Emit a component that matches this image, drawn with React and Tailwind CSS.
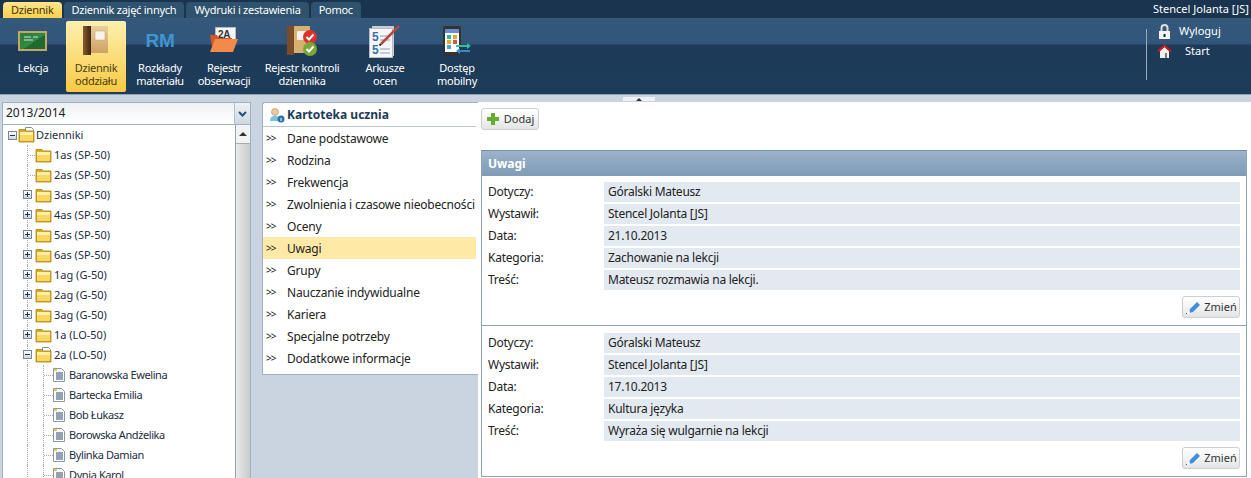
import React from 'react';

const font = { fontFamily: '"Noto Sans", sans-serif' };

const tabs = ['Dziennik', 'Dziennik zajęć innych', 'Wydruki i zestawienia', 'Pomoc'];
const classes = [
  ['1as (SP-50)', false], ['2as (SP-50)', false], ['3as (SP-50)', true], ['4as (SP-50)', true],
  ['5as (SP-50)', true], ['6as (SP-50)', true], ['1ag (G-50)', true], ['2ag (G-50)', true],
  ['3ag (G-50)', true], ['1a (LO-50)', true],
];
const students = ['Baranowska Ewelina', 'Bartecka Emilia', 'Bob Łukasz', 'Borowska Andżelika', 'Bylinka Damian', 'Dynia Karol'];
const menu = ['Dane podstawowe', 'Rodzina', 'Frekwencja', 'Zwolnienia i czasowe nieobecności', 'Oceny', 'Uwagi', 'Grupy', 'Nauczanie indywidualne', 'Kariera', 'Specjalne potrzeby', 'Dodatkowe informacje'];
const notes = [
  ['Góralski Mateusz', 'Stencel Jolanta [JS]', '21.10.2013', 'Zachowanie na lekcji', 'Mateusz rozmawia na lekcji.'],
  ['Góralski Mateusz', 'Stencel Jolanta [JS]', '17.10.2013', 'Kultura języka', 'Wyraża się wulgarnie na lekcji'],
];
const labels = ['Dotyczy:', 'Wystawił:', 'Data:', 'Kategoria:', 'Treść:'];

const BoardIcon = () => (
  <svg width="30" height="24" viewBox="0 0 30 24">
    <defs>
      <linearGradient id="board" x1="0" y1="0" x2="1" y2="1">
        <stop offset="0" stopColor="#2c7a3a" />
        <stop offset="0.55" stopColor="#2f8a44" />
        <stop offset="0.56" stopColor="#1f6a30" />
      </linearGradient>
    </defs>
    <rect x="1" y="3" width="27" height="18" fill="url(#board)" stroke="#c4a763" strokeWidth="2" />
    <path d="M6 8h7M15 8h5M6 11h9" stroke="#cfe6d2" />
  </svg>
);
const BookIcon = () => (
  <svg width="26" height="30" viewBox="0 0 26 30">
    <defs>
      <linearGradient id="cover" x1="0" y1="0" x2="0" y2="1">
        <stop offset="0" stopColor="#e9cf9c" />
        <stop offset="1" stopColor="#cfa163" />
      </linearGradient>
      <linearGradient id="spine" x1="0" y1="0" x2="1" y2="0">
        <stop offset="0" stopColor="#8a5a2e" />
        <stop offset="1" stopColor="#3d2412" />
      </linearGradient>
    </defs>
    <rect x="0" y="0" width="8" height="29" fill="url(#spine)" />
    <rect x="8" y="0" width="17" height="27" fill="url(#cover)" />
    <rect x="12" y="5" width="10" height="9" rx="1" fill="#f6f2e8" stroke="#c2a36b" strokeWidth=".5" />
  </svg>
);
const FolderDocIcon = () => (
  <svg width="30" height="28" viewBox="0 0 30 28">
    <path d="M6.5 .5h20v16h-20z" fill="#f4f4f4" stroke="#bbb" />
    <text x="9" y="11" fontSize="10" fontWeight="700" fill="#333" style={{ fontFamily: '"Liberation Sans", sans-serif' }}>2A</text>
    <path d="M1 8h7l2 3h13v14H4z" fill="#cf5a28" />
    <path d="M6 12h23l-5 13H1z" fill="#f28a4c" />
  </svg>
);
const ControlIcon = () => (
  <svg width="32" height="32" viewBox="0 0 32 32">
    <rect x="1" y="1" width="7" height="29" fill="#7a4c28" />
    <rect x="8" y="1" width="16" height="27" fill="#d8b16f" />
    <rect x="11" y="6" width="10" height="9" rx="1" fill="#f3f3f3" />
    <circle cx="24" cy="12" r="7" fill="#d9332b" />
    <path d="M20.5 12l2.5 2.5 4.5-5" stroke="#fff" strokeWidth="2" fill="none" />
    <circle cx="24" cy="24" r="7" fill="#79a83a" />
    <path d="M20.5 24l2.5 2.5 4.5-5" stroke="#fff" strokeWidth="2" fill="none" />
  </svg>
);
const SheetIcon = () => (
  <svg width="34" height="36" viewBox="0 0 34 36">
    <rect x="4" y="3" width="22" height="30" fill="#c9cdd3" />
    <rect x="1.5" y="5.5" width="23" height="29" fill="#f5f6f7" stroke="#b8bcc2" />
    <text x="4" y="18" fontSize="12" fontWeight="700" fill="#3a6db0" style={{ fontFamily: '"Liberation Sans", sans-serif' }}>5</text>
    <text x="4" y="31" fontSize="12" fontWeight="700" fill="#3a6db0" style={{ fontFamily: '"Liberation Sans", sans-serif' }}>5</text>
    <path d="M12 13h10M12 17h10M12 26h10M12 30h10" stroke="#99a" />
    <path d="M13 21L31 3" stroke="#b5483f" strokeWidth="2.5" />
    <path d="M13 21l-1.5 1.5" stroke="#333" strokeWidth="2" />
  </svg>
);
const PhoneIcon = () => (
  <svg width="28" height="30" viewBox="0 0 28 30">
    <rect x="0" y="0" width="18" height="30" rx="2" fill="#333" />
    <rect x="2" y="3" width="14" height="4" fill="#6a8fd0" />
    <rect x="2" y="7" width="14" height="19" fill="#fff" />
    <rect x="4" y="9" width="4" height="4" fill="#2fb79b" />
    <rect x="10" y="9" width="4" height="4" fill="#dcae22" />
    <rect x="4" y="14" width="4" height="4" fill="#dcae22" />
    <rect x="10" y="14" width="4" height="4" fill="#d9534f" />
    <rect x="4" y="19" width="4" height="4" fill="#4ba3dc" />
    <path d="M13 19h11v-2l4 3-4 3v-2H13z" fill="#2fc0a0" />
    <path d="M27 26H17v2l-4-3 4-3v2h10z" fill="#3f86cf" />
  </svg>
);
const RmIcon = () => (
  <span className="text-[19px] leading-8 font-bold text-[#3f95d4]" style={{ fontFamily: '"Liberation Sans", sans-serif' }}>RM</span>
);

const ribbon = [
  { w: 'w-[66px]', icon: <BoardIcon />, lines: ['Lekcja'] },
  { w: 'w-[60px]', icon: <BookIcon />, lines: ['Dziennik', 'oddziału'], active: true },
  { w: 'w-[68px]', icon: <RmIcon />, lines: ['Rozkłady', 'materiału'] },
  { w: 'w-[60px]', icon: <FolderDocIcon />, lines: ['Rejestr', 'obserwacji'] },
  { w: 'w-[96px]', icon: <ControlIcon />, lines: ['Rejestr kontroli', 'dziennika'] },
  { w: 'w-[70px]', icon: <SheetIcon />, lines: ['Arkusze', 'ocen'] },
  { w: 'w-[74px]', icon: <PhoneIcon />, lines: ['Dostęp', 'mobilny'] },
];

const Folder = ({ open }) => (
  <svg width="17" height="16" viewBox="0 0 17 16" className="shrink-0">
    {open && <path d="M7.5 .5h6l2 2v6h-8z" fill="#fff" stroke="#889" />}
    <path d="M1 2.5h6l1 1.5h8V15H1z" fill="#d7a928" stroke="#a8821a" strokeWidth=".8" />
    <path d="M2 5h13v9H2z" fill="#f8d860" />
    <path d="M2 5h13v3H2z" fill="#fdf0a4" />
  </svg>
);
const Doc = () => (
  <svg width="12" height="14" viewBox="0 0 12 14" className="shrink-0">
    <path d="M.5.5h8l3 3v10H.5z" fill="#fff" stroke="#8a97a6" />
    <rect x="1" y="1" width="3" height="2" fill="#f0c64a" />
    <path d="M3 5h7M3 7h7M3 9h7M3 11h7" stroke="#26476b" />
  </svg>
);
const Toggle = ({ open }) => (
  <span className="relative w-[9px] h-[9px] border border-[#7c8794] bg-gradient-to-b from-white to-[#cfd6dd] shrink-0">
    <span className="absolute left-[1px] top-[3px] w-[5px] h-[1px] bg-[#22354a]" />
    {!open && <span className="absolute left-[3px] top-[1px] w-[1px] h-[5px] bg-[#22354a]" />}
  </span>
);
const Guide = ({ w }) => <span className={`${w} h-full border-l border-dotted border-[#a9a9a9] shrink-0`} />;

const ClassRow = ({ name, toggle, open }) => (
  <div className="h-5 flex items-center pl-[27px]">
    <span className="w-[8px] h-full relative shrink-0 border-l border-dotted border-[#a9a9a9]">
      {toggle ? (
        <span className="absolute -left-[5px] top-[5px] flex"><Toggle open={open} /></span>
      ) : (
        <span className="absolute left-0 top-[10px] w-[7px] border-t border-dotted border-[#a9a9a9]" />
      )}
    </span>
    <Folder open={open} />
    <span className="ml-[2px] text-[#1c2c40]">{name}</span>
  </div>
);

const Field = ({ label, value }) => (
  <div className="flex h-5">
    <span className="w-[116px] leading-5 text-[#222]">{label}</span>
    <span className="flex-1 bg-[#e3e9f0] pl-1 leading-5 text-[#222]">{value}</span>
  </div>
);

const Pencil = () => (
  <svg width="17" height="16" viewBox="0 0 17 16">
    <path d="M5 10l7-7 3 3-7 7-4 1z" fill="#3f8fe0" />
    <path d="M4 11l-2 4 3-1z" fill="#fff" />
    <path d="M1 15l1-1" stroke="#555" />
  </svg>
);

export default function App() {
  return (
    <div className="w-[1251px] h-[478px] overflow-hidden flex flex-col bg-[#c9d4e0] text-[11px]" style={font}>
      {/* top tabs */}
      <div className="h-[18px] bg-[#1a3450] flex items-end pl-[3px] gap-[2px] relative">
        {tabs.map((t, i) => (
          <div key={t} className={`h-4 px-[8px] rounded-t-[4px] leading-4 tracking-[-0.25px] ${i === 0 ? 'bg-gradient-to-b from-[#ffe68a] to-[#fbcf4a] text-[#3c3413]' : 'bg-[#2f526f] text-white'}`}>
            {t}
          </div>
        ))}
        <span className="ml-auto pr-[2px] self-center text-white">Stencel Jolanta [JS]</span>
      </div>

      {/* ribbon */}
      <div className="h-[76px] bg-[linear-gradient(#3b5f80_0,#34587a_1px,#32567a_26px,#1d3b58_27px,#1d3c5a_100%)] flex">
        {ribbon.map(item => (
          <div
            key={item.lines[0] + item.w}
            className={`${item.w} flex flex-col items-center mt-[3px] h-[71px] rounded-[2px] tracking-[-0.25px] ${item.active ? 'bg-gradient-to-b from-[#fff0ae] via-[#fbdd7a] to-[#f8c93f] text-[#4a3c10]' : 'text-white'}`}
          >
            <div className="h-[36px] mt-[2px] flex items-center justify-center">{item.icon}</div>
            <div className="mt-[2px] leading-[13px] text-center whitespace-nowrap">
              {item.lines.map(l => <div key={l}>{l}</div>)}
            </div>
          </div>
        ))}
        <div className="ml-auto w-[105px] flex">
          <span className="w-px h-[51px] mt-[11px] bg-[#9aa9b8]" />
          <div className="pl-[11px] pt-[3px] text-white">
            <div className="flex items-center h-5 gap-[8px]">
              <svg width="13" height="15" viewBox="0 0 13 15">
                <path d="M3.5 7V4a3 3 0 016 0v3" fill="none" stroke="#d8dde2" strokeWidth="2" />
                <rect x="1" y="7" width="11" height="8" fill="#f4f4f4" />
                <rect x="5.5" y="10" width="2" height="3" fill="#222" />
              </svg>
              <span>Wyloguj</span>
            </div>
            <div className="flex items-center h-5 gap-[13px] -ml-[1px]">
              <svg width="15" height="14" viewBox="0 0 15 14">
                <path d="M3 7v7h9V7L7.5 3z" fill="#eee" />
                <path d="M1 7.5L7.5 1.5 14 7.5" fill="none" stroke="#d8141c" strokeWidth="2" />
                <rect x="8" y="9" width="2" height="5" fill="#777" />
              </svg>
              <span>Start</span>
            </div>
          </div>
        </div>
      </div>

      {/* splitter */}
      <div className="h-2 relative border-t border-[#8fa1b3]">
        <div className="absolute left-[623px] top-[2px] w-8 h-[4px] bg-[#edf0f4] flex items-center justify-center">
          <span className="border-x-[3px] border-x-transparent border-b-[3px] border-b-[#333]" />
        </div>
      </div>

      <div className="flex-1 min-h-0 flex">
        {/* tree column */}
        <div className="w-[249px] ml-[2px] shrink-0 flex flex-col border-x border-t border-[#9fb0c1] bg-white min-h-0">
          <div className="h-[22px] flex border-b border-[#9fb0c1] shrink-0">
            <span className="flex-1 bg-gradient-to-b from-[#eef1f4] to-white text-[12px] leading-[20px] pl-[3px] text-[#222]">2013/2014</span>
            <span className="w-4 bg-gradient-to-b from-[#eef2f6] to-[#cfd7e0] border-l border-[#b5c1cc] flex items-center justify-center">
              <svg width="9" height="6" viewBox="0 0 9 6"><path d="M1 1l3.5 3.5L8 1" fill="none" stroke="#2a4d80" strokeWidth="2" /></svg>
            </span>
          </div>
          <div className="flex-1 min-h-0 flex overflow-hidden">
            <div className="flex-1 min-w-0 -ml-[3px]">
              <div className="h-5 flex items-center pl-[8px] gap-[1px]">
                <Toggle open />
                <Folder open />
                <span className="text-[#1c2c40]">Dzienniki</span>
              </div>
              {classes.map(([name, toggle]) => <ClassRow key={name} name={name} toggle={toggle} />)}
              <ClassRow name="2a (LO-50)" toggle open />
              {students.map(s => (
                <div key={s} className="h-5 flex items-center pl-[27px]">
                  <Guide w="w-[16px]" />
                  <span className="w-[10px] h-full relative border-l border-dotted border-[#a9a9a9] shrink-0">
                    <span className="absolute left-0 top-[10px] w-[9px] border-t border-dotted border-[#a9a9a9]" />
                  </span>
                  <Doc />
                  <span className="ml-[4px] text-[#1c2c40] tracking-[-0.4px]">{s}</span>
                </div>
              ))}
            </div>
            <div className="w-[15px] border-l border-[#9aa3ac] bg-[#f2f3f4] flex flex-col shrink-0">
              <div className="h-[18px] flex items-center justify-center">
                <span className="border-x-[4px] border-x-transparent border-b-[4px] border-b-[#333]" />
              </div>
              <div className="flex-1 bg-gradient-to-r from-[#e9eaeb] to-[#c9cbcd] border-t border-[#aaa]" />
            </div>
          </div>
        </div>

        {/* student menu */}
        <div className="ml-[11px] w-[216px] shrink-0 self-start h-[273px] bg-white border-l border-y border-[#9fb0c1] rounded-tl-[3px] text-[12px]">
          <div className="h-6 mr-[2px] flex items-center pl-[6px] gap-[2px] border-b border-[#bcc5ce]">
            <svg width="16" height="16" viewBox="0 0 16 16">
              <circle cx="6" cy="5" r="3.5" fill="#e9c9a0" stroke="#a87a4a" strokeWidth=".5" />
              <path d="M1 14c0-4 2-5 5-5s5 1 5 5z" fill="#79c3df" />
              <circle cx="12" cy="12" r="3.5" fill="#2a6fb0" />
              <rect x="11.5" y="11" width="1" height="3" fill="#fff" />
            </svg>
            <span className="font-bold text-[#203a5a] pt-[1px]">Kartoteka ucznia</span>
          </div>
          {menu.map(m => (
            <div key={m} className={`h-[22px] mr-[2px] flex items-center whitespace-nowrap ${m === 'Uwagi' ? 'bg-[#ffe9a6]' : ''}`}>
              <span className="w-6 shrink-0 pl-[3px] text-[10px] tracking-[-1px] text-[#222]">&gt;&gt;</span>
              <span className="text-[#222] tracking-[-0.2px] pt-[1px]">{m}</span>
            </div>
          ))}
        </div>

        {/* details */}
        <div className="flex-1 min-w-0 bg-white pl-[3px] pr-1 pt-[6px] overflow-hidden text-[12px]">
          <button className="h-[22px] w-[58px] flex items-center justify-center gap-[4px] rounded-[3px] border border-[#ccd0d4] bg-gradient-to-b from-white via-[#f3f3f3] to-[#e2e4e6] text-[#333] text-[11px]">
            <svg width="14" height="14" viewBox="0 0 14 14"><path d="M5 1h4v4h4v4H9v4H5V9H1V5h4z" fill="#66ad2c" /></svg>
            Dodaj
          </button>
          <div className="mt-5 border border-[#8ea4ba] border-t-0">
            <div className="h-[26px] bg-gradient-to-b from-[#9cb3ca] via-[#8ca6c0] to-[#7f9bb7] border-t border-[#7a90a6] pl-[6px] leading-[25px] font-bold text-white">Uwagi</div>
            {notes.map((n, idx) => (
              <div key={idx} className={`px-[6px] h-[150px] ${idx === 0 ? 'pt-[6px] border-b border-[#8ea4ba]' : 'pt-[7px]'}`}>
                <div className="flex flex-col gap-[2px] tracking-[-0.25px]">
                  {labels.map((l, i) => <Field key={l} label={l} value={n[i]} />)}
                </div>
                <div className="flex justify-end mt-[6px]">
                  <button className="h-[22px] w-[58px] flex items-center justify-center gap-[2px] rounded-[3px] border border-[#ccd0d4] bg-gradient-to-b from-white via-[#f3f3f3] to-[#e2e4e6] text-[#333] text-[11px]">
                    <Pencil />
                    Zmień
                  </button>
                </div>
              </div>
            ))}
          </div>
        </div>
      </div>
    </div>
  );
}
